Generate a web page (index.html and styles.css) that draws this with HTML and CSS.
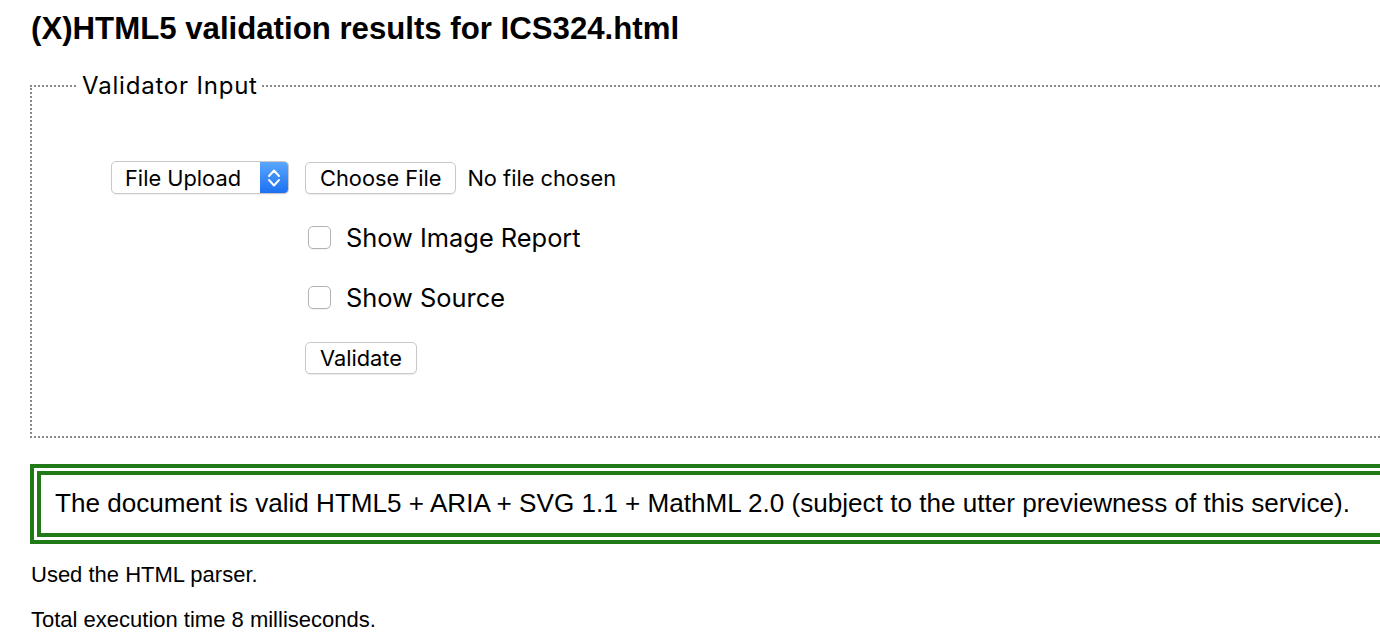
FILE: index.html
```html
<!DOCTYPE html>
<html lang="en">
<head>
<meta charset="utf-8">
<title>Validation results</title>
<link rel="stylesheet" href="styles.css">
</head>
<body>
<h1 class="title">(X)HTML5 validation results for ICS324.html</h1>
<form class="input-form">
  <fieldset class="input-set">
    <legend class="input-legend">Validator Input</legend>
    <div class="controls">
      <div class="popup">
        <span class="popup-label">File Upload</span>
        <span class="popup-stepper">
          <svg width="14" height="26" viewBox="0 0 14 26" aria-hidden="true">
            <path d="M2 11 L7 5.5 L12 11" fill="none" stroke="#fff" stroke-width="1.9" stroke-linecap="round" stroke-linejoin="round"/>
            <path d="M2 15 L7 20.5 L12 15" fill="none" stroke="#fff" stroke-width="1.9" stroke-linecap="round" stroke-linejoin="round"/>
          </svg>
        </span>
      </div>
      <div class="file-row">
        <button type="button" class="btn">Choose File</button>
        <span class="file-status">No file chosen</span>
      </div>
      <label class="check-row"><input type="checkbox" class="check"><span>Show Image Report</span></label>
      <label class="check-row"><input type="checkbox" class="check"><span>Show Source</span></label>
      <div class="submit-row"><button type="button" class="btn">Validate</button></div>
    </div>
  </fieldset>
</form>
<p class="success">The document is valid HTML5 + ARIA + SVG 1.1 + MathML 2.0 (subject to the utter previewness of this service).</p>
<p class="note first">Used the HTML parser.</p>
<p class="note">Total execution time 8 milliseconds.</p>
</body>
</html>
```
FILE: styles.css
```css
html, body {
  margin: 0;
  padding: 0;
  background: #fff;
}
body {
  padding-left: 30px;
  font-family: "Liberation Sans", Arial, sans-serif;
  color: #000;
}
.title {
  margin: 12px 0 0 1px;
  font-size: 31.2px;
  font-weight: bold;
  line-height: 34px;
}
.input-form {
  margin: 26px 0 0;
}
.input-set {
  margin: 0;
  border: 2px dotted #8a8a8a;
  border-right: none;
  padding: 61px 0 62px 45px;
  min-width: 0;
}
.input-legend {
  padding: 0 4px 0 5px;
  font-family: Inter, "Liberation Sans", sans-serif;
  font-size: 24px;
  letter-spacing: 0.8px;
  line-height: 28px;
}
.controls {
  margin-left: 34px;
  display: grid;
  grid-template-columns: 178px auto;
  grid-auto-rows: 33px;
  column-gap: 16px;
  row-gap: 27px;
  justify-content: start;
  align-items: center;
  font-family: Inter, "Liberation Sans", sans-serif;
  font-size: 21.8px;
}
.popup {
  display: flex;
  height: 33px;
  box-sizing: border-box;
  border: 1px solid #c9c9c9;
  border-radius: 5px;
  overflow: hidden;
  background: #fff;
  box-shadow: 0 1px 1px rgba(0,0,0,0.06);
}
.popup-label {
  flex: 1;
  display: flex;
  align-items: center;
  padding-left: 13px;
}
.popup-stepper {
  width: 28px;
  display: flex;
  align-items: center;
  justify-content: center;
  background: linear-gradient(#5aa7fd, #1c70f1);
}
.file-row {
  display: flex;
  align-items: center;
  gap: 11px;
}
.btn {
  height: 32px;
  box-sizing: border-box;
  border: 1px solid #c9c9c9;
  border-radius: 5px;
  background: #fff;
  box-shadow: 0 1px 1px rgba(0,0,0,0.08);
  padding: 0 14px;
  font: inherit;
  color: #000;
}
.file-status {
  white-space: nowrap;
}
.check-row {
  grid-column: 2;
  display: flex;
  align-items: center;
  gap: 15px;
  font-size: 25.4px;
}
.check {
  appearance: none;
  -webkit-appearance: none;
  margin: 0 0 0 3px;
  width: 23px;
  height: 23px;
  box-sizing: border-box;
  border: 1px solid #b3b3b3;
  border-radius: 5px;
  background: #fff;
  box-shadow: 0 1px 1px rgba(0,0,0,0.05);
}
.submit-row {
  grid-column: 2;
  display: flex;
  align-items: center;
}
.success {
  margin: 26px 0 0;
  border: 11px double #217a17;
  border-right: none;
  padding: 13px 14px 15px;
  font-size: 26.1px;
  line-height: 30px;
}
.note {
  margin: 20px 0 0 1px;
  font-size: 22px;
  line-height: 25px;
}
.note.first {
  margin-top: 18px;
}
```
